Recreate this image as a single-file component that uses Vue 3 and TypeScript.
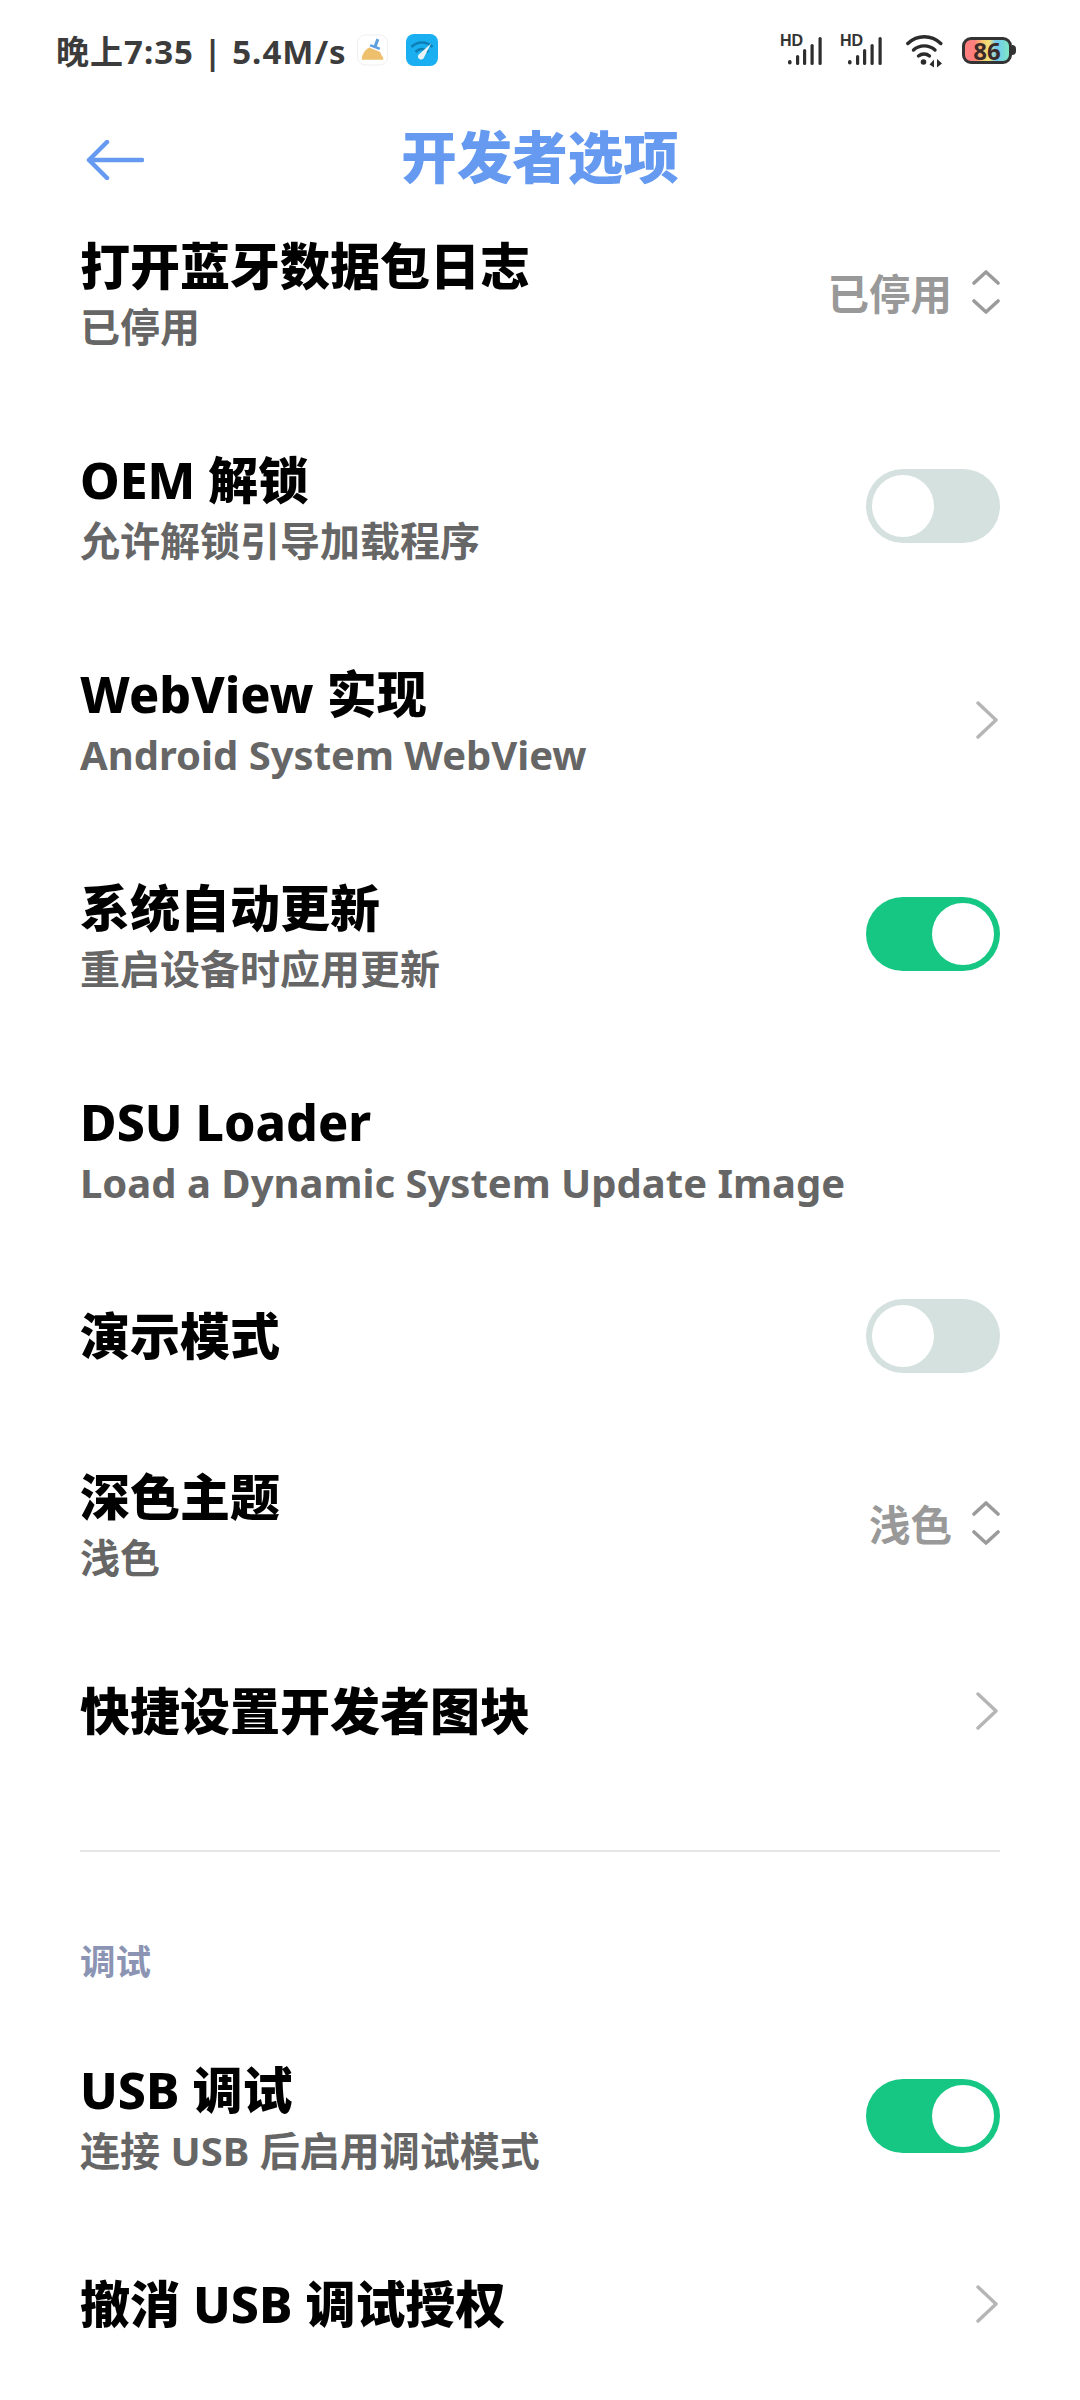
<template>
  <div class="page">
    <div class="status-bar">
      <div class="status-left">
        <span class="status-text">晚上7:35 | 5.4M/s</span>
        <svg class="app-icon broom" width="31" height="32" viewBox="0 0 32 32">
          <rect x="0.5" y="0.5" width="31" height="31" rx="8" fill="#fff" stroke="#eeeeee" />
          <path d="M20 4l3 1.500-2.500 6.500 3.500 1.800-1 2.200L13 12l1-2 3.500 1.200z" fill="#5f9fe0" />
          <path d="M12.500 13.500L24 18c0.500 2 1.500 4 3 5.500V26H5c0-5 3-10 7.500-12.500z" fill="#eebf6d" />
        </svg>
        <svg class="app-icon speed" width="32" height="32" viewBox="0 0 32 32">
          <rect width="32" height="32" rx="8" fill="#19aff0" />
          <path d="M5.500 13c6-6 15-6 21 0" fill="none" stroke="#0e7fb5" stroke-width="2.600" />
          <path d="M9.500 18c4-3.800 9-3.800 13 0" fill="none" stroke="#0e7fb5" stroke-width="2.600" />
          <path d="M25 9.500L17.500 24.500a3.200 3.200 0 0 1-5.200-3.600z" fill="#e9f2f5" />
        </svg>
      </div>
      <div class="status-right">
        <div v-for="n in 2" :key="n" class="signal">
          <span class="hd">HD</span>
          <svg width="34" height="28" viewBox="0 0 34 28">
            <rect x="0" y="23" width="3.600" height="4.500" rx="1.800" fill="#2e2e2e" />
            <rect x="8" y="18" width="3.200" height="10" rx="1.600" fill="#2e2e2e" />
            <rect x="15" y="12" width="3.200" height="16" rx="1.600" fill="#2e2e2e" />
            <rect x="22.500" y="7" width="3.200" height="21" rx="1.600" fill="#2e2e2e" />
            <rect x="30.500" y="0" width="3.200" height="28" rx="1.600" fill="#2e2e2e" />
          </svg>
        </div>
        <svg class="wifi" width="37" height="35" viewBox="0 0 37 35">
          <path d="M1.800 9.500c9.500-9 23.500-9 33 0" fill="none" stroke="#2b2b2b" stroke-width="3.400" stroke-linecap="round" />
          <path d="M7.500 16c6-5.500 15.500-5.500 21.500 0" fill="none" stroke="#2b2b2b" stroke-width="3.400" stroke-linecap="round" />
          <path d="M12.500 22c3.200-2.600 8-2.600 11 0" fill="none" stroke="#2b2b2b" stroke-width="3.400" stroke-linecap="round" />
          <circle cx="17.500" cy="28" r="2.800" fill="#2b2b2b" />
          <path d="M28 33.500v-8l-4.500 5zM31 25v8.500l5-4z" fill="#2b2b2b" />
        </svg>
        <div class="battery">
          <div class="battery-body"><span>86</span></div>
          <div class="battery-tip"></div>
        </div>
      </div>
    </div>

    <header class="title-bar">
      <svg class="back" width="58" height="40" viewBox="0 0 58 40">
        <path d="M21 2L3 20l18 18M3 20h53" fill="none" stroke="#659af0" stroke-width="4.500" stroke-linecap="round" stroke-linejoin="round" />
      </svg>
      <h1>开发者选项</h1>
    </header>

    <div class="list">
      <div v-for="item in firstGroup" :key="item.title" class="row" :class="{ tall: item.sub }">
        <div class="row-text">
          <div class="row-title">{{ item.title }}</div>
          <div v-if="item.sub" class="row-sub">{{ item.sub }}</div>
        </div>
        <div v-if="item.value" class="row-value">{{ item.value }}</div>
        <svg v-if="item.kind === 'select'" class="updown" width="28" height="44" viewBox="0 0 28 44">
          <path d="M2 13L14 2l12 11M2 31l12 11 12-11" fill="none" stroke="#9b9b9b" stroke-width="3.600" stroke-linecap="round" stroke-linejoin="round" />
        </svg>
        <svg v-if="item.kind === 'link'" class="chevron" width="24" height="38" viewBox="0 0 24 38">
          <path d="M3 2l18 17L3 36" fill="none" stroke="#b5b5b5" stroke-width="3.400" stroke-linecap="round" stroke-linejoin="round" />
        </svg>
        <div v-if="item.kind === 'off' || item.kind === 'on'" class="switch" :class="item.kind"><i></i></div>
      </div>

      <div class="divider"></div>
      <div class="section">调试</div>

      <div v-for="item in secondGroup" :key="item.title" class="row" :class="{ tall: item.sub }">
        <div class="row-text">
          <div class="row-title">{{ item.title }}</div>
          <div v-if="item.sub" class="row-sub">{{ item.sub }}</div>
        </div>
        <svg v-if="item.kind === 'link'" class="chevron" width="24" height="38" viewBox="0 0 24 38">
          <path d="M3 2l18 17L3 36" fill="none" stroke="#b5b5b5" stroke-width="3.400" stroke-linecap="round" stroke-linejoin="round" />
        </svg>
        <div v-if="item.kind === 'on'" class="switch on"><i></i></div>
      </div>
    </div>
  </div>
</template>

<script setup lang="ts">
type Item = {
  title: string;
  sub?: string;
  value?: string;
  kind?: "select" | "link" | "on" | "off";
};

const firstGroup: Item[] = [
  { title: "打开蓝牙数据包日志", sub: "已停用", value: "已停用", kind: "select" },
  { title: "OEM 解锁", sub: "允许解锁引导加载程序", kind: "off" },
  { title: "WebView 实现", sub: "Android System WebView", kind: "link" },
  { title: "系统自动更新", sub: "重启设备时应用更新", kind: "on" },
  { title: "DSU Loader", sub: "Load a Dynamic System Update Image" },
  { title: "演示模式", kind: "off" },
  { title: "深色主题", sub: "浅色", value: "浅色", kind: "select" },
  { title: "快捷设置开发者图块", kind: "link" },
];

const secondGroup: Item[] = [
  { title: "USB 调试", sub: "连接 USB 后启用调试模式", kind: "on" },
  { title: "撤消 USB 调试授权", kind: "link" },
];
</script>

<style>
html,
body {
  margin: 0;
  background: #fff;
}
</style>

<style scoped>
.page {
  width: 1080px;
  height: 2400px;
  overflow: hidden;
  background: #fff;
  font-family: "Noto Sans", "Noto Sans CJK SC", sans-serif;
  font-weight: 700;
}

.status-bar {
  height: 100px;
  padding: 0 64px 0 56px;
  box-sizing: border-box;
  display: flex;
  align-items: center;
  justify-content: space-between;
}

.status-left {
  display: flex;
  align-items: center;
}

.status-text {
  font-size: 33px;
  letter-spacing: 1px;
  color: #3c3c3c;
  white-space: nowrap;
}

.app-icon.broom {
  margin-left: 10px;
}

.app-icon.speed {
  margin-left: 18px;
}

.status-right {
  display: flex;
  align-items: center;
}

.signal {
  width: 42px;
  height: 30px;
  margin-right: 18px;
  position: relative;
}

.signal svg {
  position: absolute;
  right: 0;
  top: 2px;
}

.hd {
  position: absolute;
  left: 0;
  top: -2px;
  font-family: "Liberation Sans", sans-serif;
  font-size: 16px;
  line-height: 16px;
  color: #333;
}

.wifi {
  margin-left: 6px;
  margin-top: 3px;
}

.battery {
  display: flex;
  align-items: center;
  margin-left: 19px;
}

.battery-body {
  width: 44px;
  height: 21px;
  border: 3px solid #333;
  border-radius: 9px;
  background: linear-gradient(90deg, #ff7f7f 0 22%, #f6c76c 40%, #f2e27a 55%, #72c9f2 70%, #7de7c4 100%);
  text-align: center;
  font-size: 24px;
  line-height: 21px;
  color: #3a2a2a;
}

.battery-tip {
  width: 4px;
  height: 10px;
  background: #333;
  border-radius: 0 4px 4px 0;
}

.title-bar {
  height: 115px;
  padding-left: 86px;
  position: relative;
  display: flex;
  align-items: center;
}

.back {
  margin-top: 5px;
}

.title-bar h1 {
  position: absolute;
  left: 0;
  right: 0;
  top: 0;
  margin: 0;
  text-align: center;
  font-size: 55.500px;
  line-height: 113px;
  font-weight: 900;
  color: #659af0;
}

.list {
  margin-top: -30px;
  padding: 0 80px;
}

.row {
  height: 161px;
  display: flex;
  align-items: center;
}

.row.tall {
  height: 214px;
}

.row.tall .row-text {
  padding-top: 8px;
}

.row-text {
  flex: 1;
  min-width: 0;
}

.row-title {
  font-size: 50px;
  line-height: 62px;
  font-weight: 800;
  color: #000;
  white-space: nowrap;
}

.row-sub {
  font-size: 40px;
  line-height: 60px;
  color: #666;
  white-space: nowrap;
}

.row-value {
  font-size: 41.500px;
  color: #999;
  margin-right: 20px;
}

.chevron {
  margin-right: 1px;
}

.switch {
  width: 134px;
  height: 74px;
  box-sizing: border-box;
  border-radius: 37px;
  padding: 6px;
  display: flex;
}

.switch i {
  width: 62px;
  height: 62px;
  border-radius: 50%;
  background: #fff;
}

.switch.off {
  background: #d5e1df;
}

.switch.on {
  background: #16c784;
  justify-content: flex-end;
}

.divider {
  margin-top: 59px;
  height: 2px;
  background: #e6e6e6;
}

.section {
  margin-top: 84px;
  height: 73px;
  font-size: 35.500px;
  line-height: 50px;
  color: #8c94b3;
}
</style>
